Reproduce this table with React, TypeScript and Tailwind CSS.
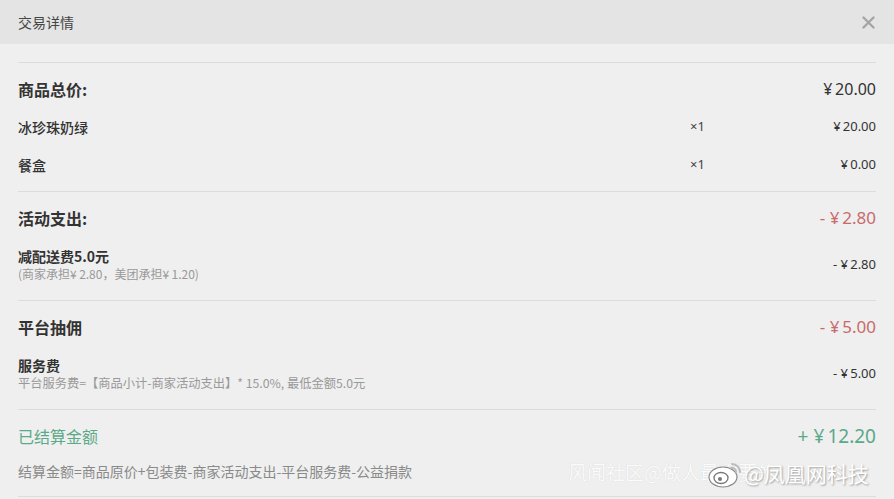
import React from "react";

const FONT = { fontFamily: '"Noto Sans CJK SC", "Noto Sans", sans-serif' };
const NUM = { fontFamily: '"Noto Sans", "Noto Sans CJK SC", sans-serif' };

function Line() {
  return <div className="h-px bg-[#dcdcdc] mx-[18px]" />;
}

function ItemRow({ name, qty, price }: { name: string; qty: string; price: string }) {
  return (
    <div className="h-[38px] flex items-center px-[18px] text-[14px] text-[#333]">
      <div className="flex-1 font-medium">{name}</div>
      <div style={NUM} className="w-[106px] text-[13px] text-[#444]">{qty}</div>
      <div style={NUM} className="w-[80px] text-right text-[13px] text-[#333]">{price}</div>
    </div>
  );
}

function TitleRow({ title, amount, color }: { title: string; amount: string; color: string }) {
  return (
    <div className="h-[38px] flex items-center justify-between px-[18px]">
      <div className="text-[16px] font-semibold text-[#333]">{title}</div>
      <div style={NUM} className={"text-[17px] " + color}>{amount}</div>
    </div>
  );
}

export default function App() {
  return (
    <div style={FONT} className="relative w-[894px] h-[499px] bg-[#efefef] overflow-hidden">
      <div className="h-[44px] bg-[#e4e4e4] flex items-center justify-between pl-[18px] pr-[18px]">
        <div className="text-[14px] text-[#444]">交易详情</div>
        <svg width="13" height="13" viewBox="0 0 13 13" className="mr-[1px]">
          <path d="M1.5 1.5 L11.5 11.5 M11.5 1.5 L1.5 11.5" stroke="#a5a5a5" strokeWidth="2.4" strokeLinecap="round" />
        </svg>
      </div>
      <div className="h-[18px]" />
      <Line />

      <div className="py-[7px]">
        <div className="h-[38px] flex items-center justify-between px-[18px]">
          <div className="text-[16px] font-semibold text-[#333]">商品总价:</div>
          <div style={NUM} className="text-[16px] text-[#333]">¥{"\u2009"}20.00</div>
        </div>
        <ItemRow name="冰珍珠奶绿" qty="×1" price={"¥\u200920.00"} />
        <ItemRow name="餐盒" qty="×1" price={"¥\u20090.00"} />
      </div>
      <Line />

      <div className="py-[7px]">
        <TitleRow title="活动支出:" amount={"- ¥\u20092.80"} color="text-[#c96a6c]" />
        <div className="h-[56px] flex items-center justify-between px-[18px]">
          <div className="flex flex-col">
            <div className="text-[14px] leading-[18px] font-semibold text-[#333]">减配送费5.0元</div>
            <div className="text-[12px] leading-[18px] text-[#999]">(商家承担¥{"\u2009"}2.80，美团承担¥{"\u2009"}1.20)</div>
          </div>
          <div style={NUM} className="text-[13px] text-[#333]">- ¥{"\u2009"}2.80</div>
        </div>
      </div>
      <Line />

      <div className="py-[7px]">
        <TitleRow title="平台抽佣" amount={"- ¥\u20095.00"} color="text-[#c96a6c]" />
        <div className="h-[56px] flex items-center justify-between px-[18px]">
          <div className="flex flex-col">
            <div className="text-[14px] leading-[18px] font-semibold text-[#333]">服务费</div>
            <div className="text-[12.25px] leading-[18px] text-[#999]">平台服务费=【商品小计-商家活动支出】* 15.0%, 最低金额5.0元</div>
          </div>
          <div style={NUM} className="text-[13px] text-[#333]">- ¥{"\u2009"}5.00</div>
        </div>
      </div>
      <Line />

      <div className="pt-[7px]">
        <div className="h-[38px] flex items-center justify-between px-[18px]">
          <div className="text-[16px] text-[#5aa988]">已结算金额</div>
          <div style={NUM} className="text-[19px] text-[#5aa988]">+ ¥{"\u2009"}12.20</div>
        </div>
        <div className="h-[32px] flex items-center px-[18px] text-[14px] text-[#8a8a8a]">
          结算金额=商品原价+包装费-商家活动支出-平台服务费-公益捐款
        </div>
      </div>
      <div className="h-[9px]" />
      <Line />

      {/* watermarks */}
      <div className="absolute left-[568px] top-[458px] text-[19px] text-white/90 whitespace-nowrap [text-shadow:0_0_1px_rgba(0,0,0,0.15)]">
        风闻社区@做人最重要的
      </div>
      <div className="absolute left-[706px] top-[458px] flex items-center">
        <svg width="38" height="30" viewBox="0 0 38 30">
          <ellipse cx="17" cy="18" rx="14" ry="10" fill="white" stroke="#888" strokeWidth="1.2" />
          <ellipse cx="15" cy="19" rx="7" ry="5.5" fill="none" stroke="#777" strokeWidth="1.3" />
          <circle cx="14" cy="20" r="2" fill="#777" />
          <path d="M26 5 a8 8 0 0 1 8 8" fill="none" stroke="#bbb" strokeWidth="2" strokeLinecap="round" />
          <path d="M25 9 a4 4 0 0 1 5 4" fill="none" stroke="#bbb" strokeWidth="2" strokeLinecap="round" />
        </svg>
        <div className="text-[21px] text-white whitespace-nowrap [text-shadow:1px_1px_2px_rgba(0,0,0,0.35)]">@凤凰网科技</div>
      </div>
    </div>
  );
}
